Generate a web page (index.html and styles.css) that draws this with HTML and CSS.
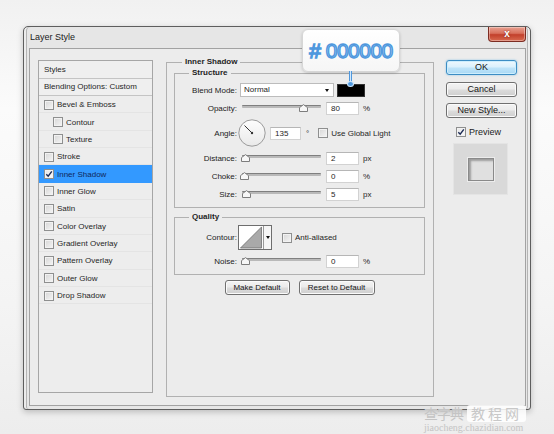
FILE: index.html
```html
<!DOCTYPE html>
<html>
<head>
<meta charset="utf-8">
<link rel="stylesheet" href="styles.css">
</head>
<body>
<div class="page">
  <div class="window">
    <div class="titlebar">
      <span class="title">Layer Style</span>
      <div class="close">x</div>
    </div>
    <div class="frame">
      <div class="styles-panel">
        <div class="hdr">Styles</div>
        <div class="hdr hdr2">Blending Options: Custom</div>
        <ul class="list">
          <li class="item"><span class="cb"></span>Bevel &amp; Emboss</li>
          <li class="item sub"><span class="cb"></span>Contour</li>
          <li class="item sub"><span class="cb"></span>Texture</li>
          <li class="item"><span class="cb"></span>Stroke</li>
          <li class="item active"><span class="cb checked"><svg viewBox="0 0 8 8" width="8" height="8"><path d="M1.3 4.2 L3.2 6.2 L6.8 1.4" fill="none" stroke="#1b2a55" stroke-width="1.4"/></svg></span>Inner Shadow</li>
          <li class="item"><span class="cb"></span>Inner Glow</li>
          <li class="item"><span class="cb"></span>Satin</li>
          <li class="item"><span class="cb"></span>Color Overlay</li>
          <li class="item"><span class="cb"></span>Gradient Overlay</li>
          <li class="item"><span class="cb"></span>Pattern Overlay</li>
          <li class="item"><span class="cb"></span>Outer Glow</li>
          <li class="item"><span class="cb"></span>Drop Shadow</li>
        </ul>
      </div>

      <fieldset class="main">
        <legend>Inner Shadow</legend>
        <fieldset class="group structure">
          <legend>Structure</legend>
          <div class="rows">
            <div class="row">
              <span class="lbl">Blend Mode:</span>
              <div class="select">Normal<span class="arrow"></span></div>
              <div class="swatch"></div>
            </div>
            <div class="row">
              <span class="lbl">Opacity:</span>
              <div class="slider"><div class="track"></div><svg class="thumb" style="left:57px" viewBox="0 0 9 8" width="9" height="8"><polygon points="0.5,7.5 0.5,3.6 4.5,0.6 8.5,3.6 8.5,7.5" fill="#f7f7f7" stroke="#7d7d7d"/></svg></div>
              <div class="input">80</div>
              <span class="unit">%</span>
            </div>
            <div class="row">
              <span class="lbl">Angle:</span>
              <svg class="dial" viewBox="0 0 28 28" width="28" height="28">
                <defs><linearGradient id="dg" x1="0" y1="0" x2="0" y2="1"><stop offset="0" stop-color="#fdfdfd"/><stop offset="1" stop-color="#e9e9e9"/></linearGradient></defs>
                <circle cx="14" cy="14" r="13.2" fill="url(#dg)" stroke="#9b9b9b" stroke-width="1"/>
                <line x1="14" y1="14" x2="6.5" y2="6.5" stroke="#333" stroke-width="1"/>
                <circle cx="14" cy="14" r="1.2" fill="#333"/>
              </svg>
              <div class="input angle-in">135</div>
              <span class="deg">°</span>
              <span class="cb gl"></span>
              <span class="cblbl">Use Global Light</span>
            </div>
            <div class="row">
              <span class="lbl">Distance:</span>
              <div class="slider"><div class="track"></div><svg class="thumb" style="left:-1px" viewBox="0 0 9 8" width="9" height="8"><polygon points="0.5,7.5 0.5,3.6 4.5,0.6 8.5,3.6 8.5,7.5" fill="#f7f7f7" stroke="#7d7d7d"/></svg></div>
              <div class="input">2</div>
              <span class="unit">px</span>
            </div>
            <div class="row">
              <span class="lbl">Choke:</span>
              <div class="slider"><div class="track"></div><svg class="thumb" style="left:-2px" viewBox="0 0 9 8" width="9" height="8"><polygon points="0.5,7.5 0.5,3.6 4.5,0.6 8.5,3.6 8.5,7.5" fill="#f7f7f7" stroke="#7d7d7d"/></svg></div>
              <div class="input">0</div>
              <span class="unit">%</span>
            </div>
            <div class="row">
              <span class="lbl">Size:</span>
              <div class="slider"><div class="track"></div><svg class="thumb" style="left:0px" viewBox="0 0 9 8" width="9" height="8"><polygon points="0.5,7.5 0.5,3.6 4.5,0.6 8.5,3.6 8.5,7.5" fill="#f7f7f7" stroke="#7d7d7d"/></svg></div>
              <div class="input">5</div>
              <span class="unit">px</span>
            </div>
          </div>
        </fieldset>

        <fieldset class="group quality">
          <legend>Quality</legend>
          <div class="qrows">
            <div class="row contour-row">
              <span class="lbl">Contour:</span>
              <div class="contour">
                <svg viewBox="0 0 24 24" width="24" height="24" class="curve"><polygon points="1,23 23,1 23,23" fill="#a9a9a9" stroke="#6a6a6a" stroke-width="0.8"/></svg>
                <div class="cdrop"><span class="arrow"></span></div>
              </div>
              <span class="cb aa"></span>
              <span class="cblbl">Anti-aliased</span>
            </div>
            <div class="row">
              <span class="lbl">Noise:</span>
              <div class="slider"><div class="track"></div><svg class="thumb" style="left:-1px" viewBox="0 0 9 8" width="9" height="8"><polygon points="0.5,7.5 0.5,3.6 4.5,0.6 8.5,3.6 8.5,7.5" fill="#f7f7f7" stroke="#7d7d7d"/></svg></div>
              <div class="input">0</div>
              <span class="unit">%</span>
            </div>
          </div>
        </fieldset>

        <div class="btnrow">
          <div class="btn small">Make Default</div>
          <div class="btn small reset">Reset to Default</div>
        </div>
      </fieldset>

      <div class="side">
        <div class="btn ok">OK</div>
        <div class="btn">Cancel</div>
        <div class="btn">New Style...</div>
        <div class="preview-row">
          <span class="cb checked"><svg viewBox="0 0 8 8" width="8" height="8"><path d="M1.3 4.2 L3.2 6.2 L6.8 1.4" fill="none" stroke="#1b2a55" stroke-width="1.4"/></svg></span>
          <span class="plbl">Preview</span>
        </div>
        <div class="preview-box"><div class="preview-sq"></div></div>
      </div>
    </div>
  </div>

  <div class="tooltip">
    <span class="hex"># 000000</span>
  </div>
  <div class="pin"><div class="pin-line"></div><div class="pin-dot"></div></div>

  <div class="watermark">
    <div class="wm-top"><span class="wm-a">查字典</span><span class="wm-b">教程网</span></div>
    <div class="wm-url">jiaocheng.chazidian.com</div>
  </div>
</div>
</body>
</html>
```

FILE: styles.css
```css
* { box-sizing: border-box; }
html, body { margin: 0; padding: 0; }
body {
  width: 554px;
  height: 434px;
  overflow: hidden;
  font-family: "Liberation Sans", Arial, sans-serif;
  font-size: 8px;
  color: #262626;
  background: linear-gradient(180deg, #f1f1f1 0%, #fbfbfb 25%, #f4f4f4 70%, #ededed 100%);
}
.page {
  position: relative;
  width: 554px;
  height: 434px;
  padding: 26px 0 0 23px;
}
.window {
  width: 508px;
  height: 384px;
  border: 1px solid #5e5e5e;
  border-radius: 5px 5px 3px 3px;
  background: #e6e6e6;
  box-shadow: 0 2px 6px rgba(0,0,0,0.22), inset 2px 0 0 #ececec, inset 3px 0 0 #b4b4b4, inset -2px 0 0 #ececec, inset -3px 0 0 #b4b4b4;
  display: flex;
  flex-direction: column;
}
.titlebar {
  height: 21px;
  display: flex;
  align-items: flex-start;
  padding-left: 6px;
  flex: none;
}
.title {
  font-size: 9px;
  line-height: 21px;
  color: #1a1a1a;
}
.close {
  margin-left: auto;
  margin-right: 4px;
  width: 38px;
  height: 15px;
  border: 1px solid #7c2c22;
  border-top: none;
  border-radius: 0 0 4px 4px;
  background: linear-gradient(180deg, #e9a191 0%, #d8705c 45%, #c2402b 55%, #d86a50 100%);
  box-shadow: inset 0 0 0 1px rgba(255,255,255,0.35);
  color: #fff;
  font-weight: bold;
  font-size: 10px;
  line-height: 13px;
  text-align: center;
  text-shadow: 0 0 2px #7a1a10;
}
.frame {
  flex: 1;
  margin: 0 4px 3px 5px;
  border: 1px solid #a2a2a2;
  background: #ececec;
  display: flex;
  align-items: flex-start;
  padding: 8px 0 0 8px;
}

/* left styles list */
.styles-panel {
  width: 115px;
  height: 333px;
  margin-top: 3px;
  border: 1px solid #a6a6a6;
  background: #ededed;
  flex: none;
}
.hdr {
  height: 18px;
  line-height: 17px;
  padding-left: 5px;
  border-bottom: 1px solid #c4c4c4;
  background: #efefef;
}
.hdr2 { height: 17px; line-height: 16px; }
.list { list-style: none; margin: 0; padding: 0; }
.item {
  height: 17.36px;
  display: flex;
  align-items: center;
  gap: 3px;
  padding-left: 5px;
  box-shadow: inset 0 -1px 0 #e4e4e4;
}
.item.sub { padding-left: 14px; }
.item.active {
  background: #3399ff;
  color: #10285a;
  box-shadow: none;
}
.cb {
  width: 10px;
  height: 10px;
  flex: none;
  border: 1px solid #8e8f8f;
  background: linear-gradient(135deg, #d6d6d6, #f5f5f5);
  box-shadow: inset 0 0 0 1px #f2f2f2;
  display: flex;
  align-items: center;
  justify-content: center;
}
.cb.checked { background: linear-gradient(135deg, #e6e6e6, #fafafa); }

/* main fieldsets */
fieldset { margin: 0; min-width: 0; }
legend {
  font-weight: bold;
  font-size: 8px;
  line-height: 10px;
  padding: 0 3px;
  color: #1e1e1e;
}
.main {
  width: 268px;
  height: 340px;
  margin-left: 13px;
  border: 1px solid #b1b1b1;
  padding: 1px 8px 0 7px;
  flex: none;
}
.main > legend { margin-left: 8px; }
.group {
  width: 251px;
  border: 1px solid #b1b1b1;
  padding: 0;
}
.group > legend { margin-left: 14px; }
.structure { height: 140px; }
.quality { height: 63px; margin-top: 4px; }
.rows {
  display: grid;
  grid-template-rows: 14px 14px 28px 14px 14px 14px;
  row-gap: 4px;
  padding-top: 5px;
}
.qrows {
  display: grid;
  grid-template-rows: 25px 14px;
  row-gap: 4px;
  padding-top: 3px;
}
.row {
  display: flex;
  align-items: center;
  height: 100%;
}
.lbl {
  width: 62px;
  text-align: right;
  flex: none;
  color: #222;
}
.select {
  margin-left: 3px;
  width: 94px;
  height: 14px;
  border: 1px solid #bcbcbc;
  background: #fff;
  padding-left: 3px;
  line-height: 12px;
  position: relative;
  display: flex;
  align-items: center;
}
.arrow {
  width: 0;
  height: 0;
  border-left: 2.5px solid transparent;
  border-right: 2.5px solid transparent;
  border-top: 3px solid #111;
}
.select .arrow { margin-left: auto; margin-right: 4px; }
.swatch {
  margin-left: 3px;
  width: 28px;
  height: 13px;
  background: #000;
  border: 1px solid #333;
}
.slider {
  margin-left: 5px;
  width: 79px;
  height: 14px;
  position: relative;
  flex: none;
}
.track {
  margin-top: 4px;
  height: 3px;
  border-radius: 1px;
  background: #b9b9b9;
  border-top: 1px solid #7f7f7f;
}
.thumb {
  position: absolute;
  top: 3px;
  display: block;
}
.input {
  margin-left: 5px;
  width: 33px;
  height: 13px;
  background: #fff;
  border: 1px solid #d2d2d2;
  border-top-color: #b6b6b6;
  padding-left: 4px;
  line-height: 11px;
  flex: none;
}
.unit { margin-left: 4px; }
.dial { margin-left: 1px; flex: none; display: block; }
.angle-in { margin-left: 4px; width: 31px; }
.deg { margin-left: 5px; }
.gl { margin-left: 9px; }
.cblbl { margin-left: 3px; }
.contour {
  margin-left: 1px;
  width: 34px;
  height: 25px;
  border: 1px solid #6e6e6e;
  background: #fff;
  display: flex;
  flex: none;
}
.curve { display: block; flex: none; width: 24px; height: 23px; }
.cdrop {
  flex: 1;
  border-left: 1px solid #9a9a9a;
  display: flex;
  align-items: center;
  justify-content: center;
  background: #f6f6f6;
}
.aa { margin-left: 10px; }

.btnrow {
  display: flex;
  justify-content: center;
  gap: 9px;
  margin-top: 5px;
}
.btn {
  height: 15px;
  border: 1px solid #707070;
  border-radius: 3px;
  background: linear-gradient(180deg, #f3f3f3 0%, #ebebeb 48%, #dcdcdc 52%, #cfcfcf 100%);
  box-shadow: inset 0 0 0 1px #fbfbfb;
  text-align: center;
  font-size: 9px;
  line-height: 13px;
  color: #151515;
}
.btn.small { width: 65px; font-size: 8px; }
.btn.small.reset { width: 76px; }

/* side column */
.side {
  width: 71px;
  margin-left: 12px;
  margin-top: 3px;
  display: flex;
  flex-direction: column;
  flex: none;
}
.side .btn { margin-bottom: 7px; }
.side .btn:nth-child(2) { margin-bottom: 6px; }
.btn.ok {
  border-color: #3c8dc4;
  background: linear-gradient(180deg, #eef8fe 0%, #daf0fc 48%, #bfe4f9 52%, #a9d9f5 100%);
  box-shadow: inset 0 0 0 1px #cdeefd, 0 0 2px rgba(60,160,220,0.6);
}
.preview-row {
  display: flex;
  align-items: center;
  margin-top: 1px;
  padding-left: 10px;
  height: 11px;
}
.plbl { margin-left: 3px; font-size: 9px; color: #1c1c1c; }
.preview-box {
  margin: 6px 0 0 7px;
  width: 55px;
  height: 52px;
  background: #d9d9d9;
  border: 1px solid #e4e4e4;
  display: flex;
  align-items: center;
  justify-content: center;
}
.preview-sq {
  width: 26px;
  height: 23px;
  background: #e0e0e0;
  border: 1px solid #8a8a8a;
  box-shadow: inset 2px 2px 2px rgba(0,0,0,0.3), 0 0 0 1px #ececec;
}

/* tooltip callout (overlay) */
.tooltip {
  position: absolute;
  left: 302px;
  top: 29px;
  width: 98px;
  height: 43px;
  border: 1px solid #d6d6d6;
  border-radius: 6px;
  background: linear-gradient(180deg, #ffffff, #f6f6f6);
  box-shadow: 0 1px 3px rgba(0,0,0,0.18);
  display: flex;
  align-items: center;
  justify-content: center;
}
.hex {
  font-family: "Liberation Sans", Arial, sans-serif;
  font-size: 21px;
  font-weight: normal;
  color: #d4ebfd;
  -webkit-text-stroke: 1.4px #4f98de;
  letter-spacing: -0.5px;
}
.pin {
  position: absolute;
  left: 347px;
  top: 71px;
  width: 7px;
  height: 16px;
  display: flex;
  flex-direction: column;
  align-items: center;
}
.pin-line {
  width: 3px;
  height: 11px;
  background: #cfe7fb;
  border-left: 1px solid #4f98de;
  border-right: 1px solid #4f98de;
}
.pin-dot {
  width: 7px;
  height: 6px;
  margin-top: -1px;
  border-radius: 50%;
  background: #4f98de;
  border: 1px solid #cfe7fb;
}

/* watermark (overlay) */
.watermark {
  position: absolute;
  left: 424px;
  top: 405px;
  width: 126px;
  color: #c9c9c9;
}
.wm-top {
  display: flex;
  align-items: center;
  font-family: "Noto Sans CJK SC", sans-serif;
  font-size: 14px;
  line-height: 17px;
}
.wm-a { color: #c4c4c4; letter-spacing: -1px; }
.wm-b {
  margin-left: 4px;
  padding: 0 4px;
  background: rgba(255,255,255,0.85);
  border-radius: 3px;
  color: #c8c8c8;
  letter-spacing: 3px;
}
.wm-url {
  font-family: "Liberation Serif", serif;
  font-size: 10px;
  line-height: 11px;
  color: #c4c4c4;
}
```
